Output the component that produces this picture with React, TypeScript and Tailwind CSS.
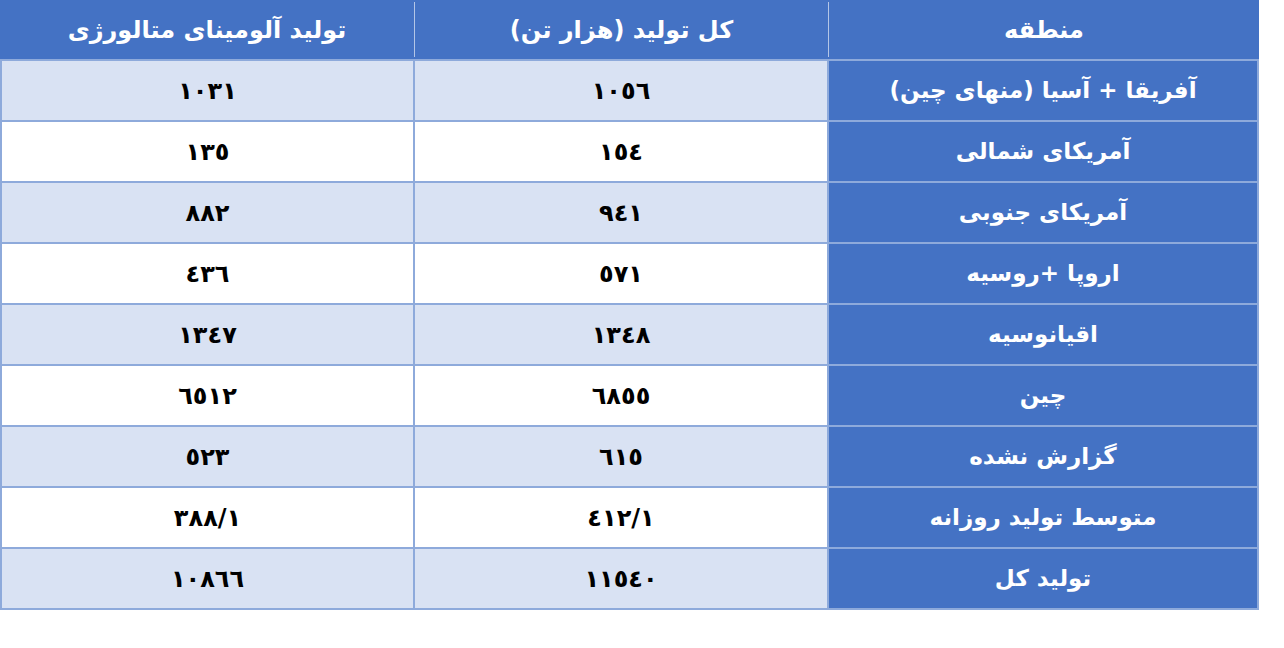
const rows = [
  { region: 'آفریقا + آسیا (منهای چین)', total: '١٠٥٦', alumina: '١٠٣١' },
  { region: 'آمریکای شمالی', total: '١٥٤', alumina: '١٣٥' },
  { region: 'آمریکای جنوبی', total: '٩٤١', alumina: '٨٨٢' },
  { region: 'اروپا +روسیه', total: '٥٧١', alumina: '٤٣٦' },
  { region: 'اقیانوسیه', total: '١٣٤٨', alumina: '١٣٤٧' },
  { region: 'چین', total: '٦٨٥٥', alumina: '٦٥١٢' },
  { region: 'گزارش نشده', total: '٦١٥', alumina: '٥٢٣' },
  { region: 'متوسط تولید روزانه', total: '٤١٢/١', alumina: '٣٨٨/١' },
  { region: 'تولید کل', total: '١١٥٤٠', alumina: '١٠٨٦٦' },
];

export default function App() {
  return (
    <div className="w-[1284px] h-[648px] bg-white font-['DejaVu_Sans',sans-serif]">
      <div dir="rtl" className="w-[1259px]">
        <div className="flex h-[59px] bg-[#4472c4] py-[2px] text-white font-bold text-[24px]">
          <div className="w-[430px] flex items-center justify-center">منطقه</div>
          <div className="w-[414px] flex items-center justify-center border-r border-[#b4c6e7]">کل تولید (هزار تن)</div>
          <div className="w-[415px] flex items-center justify-center border-r border-[#b4c6e7]">تولید آلومینای متالورژی</div>
        </div>
        <div className="border-t-2 border-[#8eaadb]">
          {rows.map((r, i) => (
            <div
              key={i}
              className={`flex h-[61px] border-b-2 border-x-2 border-[#8eaadb] font-bold ${
                i % 2 === 0 ? 'bg-[#d9e2f3]' : 'bg-white'
              }`}
            >
              <div className="w-[428px] flex items-center justify-center bg-[#4472c4] text-white text-[23px]">{r.region}</div>
              <div className="w-[414px] flex items-center justify-center border-r-2 border-[#8eaadb] text-black text-[24px]">{r.total}</div>
              <div className="w-[413px] flex items-center justify-center border-r-2 border-[#8eaadb] text-black text-[24px]">{r.alumina}</div>
            </div>
          ))}
        </div>
      </div>
    </div>
  );
}
